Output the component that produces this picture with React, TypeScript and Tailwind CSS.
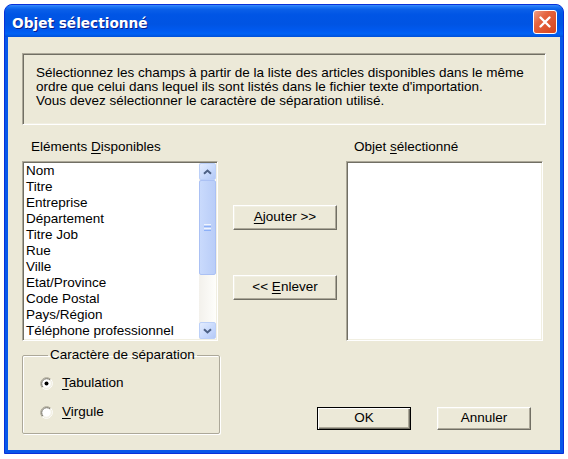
import React from 'react'

const items = [
  'Nom',
  'Titre',
  'Entreprise',
  'Département',
  'Titre Job',
  'Rue',
  'Ville',
  'Etat/Province',
  'Code Postal',
  'Pays/Région',
  'Téléphone professionnel',
]

// classic 3D edges
const sunken =
  'border border-t-[#aca899] border-l-[#aca899] border-b-white border-r-white shadow-[inset_1px_1px_0_#716f64,inset_-1px_-1px_0_#f1efe2]'
const raised =
  'border border-t-white border-l-white border-b-[#716f64] border-r-[#716f64] shadow-[inset_-1px_-1px_0_#aca899,inset_1px_1px_0_#f1efe2]'

function ScrollArrow({ down }: { down?: boolean }) {
  return (
    <div className="w-[17px] h-[17px] shrink-0 rounded-[2px] border border-[#bcd0f8] bg-[linear-gradient(135deg,#e3ecfe_0%,#c6d8fc_60%,#b4c9f6_100%)] flex items-center justify-center">
      <svg width="9" height="6" viewBox="0 0 9 6">
        <path
          d={down ? 'M1 1.2l3.5 3.3L8 1.2' : 'M1 4.8l3.5-3.3L8 4.8'}
          fill="none"
          stroke="#4d6185"
          strokeWidth="2"
        />
      </svg>
    </div>
  )
}

function Radio({ checked }: { checked?: boolean }) {
  return (
    <svg width="13" height="13" viewBox="0 0 13 13" className="shrink-0">
      <circle cx="6.5" cy="6.5" r="5" fill="#fff" />
      <path d="M2.26 10.74A6 6 0 0 1 10.74 2.26" fill="none" stroke="#aca899" />
      <path d="M10.74 2.26A6 6 0 0 1 2.26 10.74" fill="none" stroke="#fff" />
      <path d="M2.97 10.03A5 5 0 0 1 10.03 2.97" fill="none" stroke="#716f64" />
      <path d="M10.03 2.97A5 5 0 0 1 2.97 10.03" fill="none" stroke="#f1efe2" />
      {checked && <circle cx="6.5" cy="6.5" r="2" fill="#000" />}
    </svg>
  )
}

function Mn({ children }: { children: React.ReactNode }) {
  return <span className="underline underline-offset-2">{children}</span>
}

export default function App() {
  return (
    <div className="w-[568px] h-[459px] bg-white pl-[4px] pt-[4px] font-['Liberation_Sans',Arial,sans-serif] text-[13.5px] text-black">
      <div className="w-[560px] h-[450px] flex flex-col rounded-t-[8px] border border-[#0831d9] bg-[#0757e8] overflow-hidden">
        {/* title bar */}
        <div className="h-[32px] shrink-0 flex items-start justify-between pl-[7px] pr-[6px] bg-[linear-gradient(180deg,#3b8cf8_0%,#1b74f5_6%,#0a5fe8_14%,#0055e5_30%,#0054e3_60%,#005af0_80%,#0062f5_90%,#0050d8_100%)]">
          <span className="mt-[10px] leading-[17px] text-[13.7px] font-bold text-white font-['DejaVu_Sans',Verdana,sans-serif] [text-shadow:1px_1px_0_#0a1e8c]">
            Objet sélectionné
          </span>
          <div className="mt-[5px] w-[24px] h-[24px] rounded-[3px] border border-white bg-[linear-gradient(135deg,#ef9f86_0%,#e4643f_35%,#d8441d_100%)] flex items-center justify-center">
            <svg width="14" height="14" viewBox="0 0 14 14">
              <path d="M2.5 2.5l9 9M11.5 2.5l-9 9" stroke="#fff" strokeWidth="2.4" strokeLinecap="round" />
            </svg>
          </div>
        </div>

        {/* body */}
        <div className="flex-1 mx-[3px] mb-[3px] bg-[#ece9d8] px-[14px] pt-[16px] pb-[16px] flex flex-col">
          <div className={`h-[72px] ${sunken} pl-[13px] pt-[12px] leading-[14px]`}>
            <div>Sélectionnez les champs à partir de la liste des articles disponibles dans le même</div>
            <div>ordre que celui dans lequel ils sont listés dans le fichier texte d'importation.</div>
            <div>Vous devez sélectionner le caractère de séparation utilisé.</div>
          </div>

          <div className="flex mt-[14px]">
            <div className="w-[196px]">
              <div className="leading-[16px] pl-[9px]">
                Eléments <Mn>D</Mn>isponibles
              </div>
              <div className={`mt-[6px] h-[180px] bg-white flex ${sunken} p-[1px]`}>
                <div className="flex-1 pl-[2px] leading-[16px] whitespace-nowrap overflow-hidden">
                  {items.map((it) => (
                    <div key={it}>{it}</div>
                  ))}
                </div>
                <div className="w-[17px] flex flex-col bg-[linear-gradient(90deg,#f3f1ec,#fefefb)]">
                  <ScrollArrow />
                  <div className="h-[95px] rounded-[2px] border border-[#abc1f4] bg-[linear-gradient(90deg,#c9dafc,#b9cdf8)] flex flex-col items-center justify-center gap-[1px]">
                    <div className="w-[7px] h-[1px] bg-[#eef4fe]" />
                    <div className="w-[7px] h-[1px] bg-[#8cb0f8]" />
                    <div className="w-[7px] h-[1px] bg-[#eef4fe]" />
                    <div className="w-[7px] h-[1px] bg-[#8cb0f8]" />
                  </div>
                  <div className="flex-1" />
                  <ScrollArrow down />
                </div>
              </div>
            </div>

            <div className="w-[104px] ml-[15px] pt-[22px] flex flex-col">
              <button className={`mt-[44px] h-[25px] bg-[#ece9d8] ${raised}`}>
                <Mn>A</Mn>jouter &gt;&gt;
              </button>
              <button className={`mt-[45px] h-[25px] bg-[#ece9d8] ${raised}`}>
                &lt;&lt; <Mn>E</Mn>nlever
              </button>
            </div>

            <div className="w-[197px] ml-[9px]">
              <div className="leading-[16px] pl-[8px]">
                Objet <Mn>s</Mn>électionné
              </div>
              <div className={`mt-[6px] h-[180px] bg-white ${sunken}`} />
            </div>
          </div>

          <div className="flex items-end mt-[6px]">
            <fieldset className="w-[198px] h-[87px] border border-[#aca899] shadow-[inset_1px_1px_0_#fff,1px_1px_0_#fff] rounded-[2px] px-[17px] pb-[13px]">
              <legend className="ml-[8px] px-[2px] leading-[16px]">Caractère de séparation</legend>
              <div className="mt-[12px] flex flex-col gap-[13px]">
                <label className="h-[16px] flex items-center gap-[9px]">
                  <Radio checked />
                  <span>
                    <Mn>T</Mn>abulation
                  </span>
                </label>
                <label className="h-[16px] flex items-center gap-[9px]">
                  <Radio />
                  <span>
                    <Mn>V</Mn>irgule
                  </span>
                </label>
              </div>
            </fieldset>
            <div className="ml-auto mr-[15px] mb-[4px] flex gap-[26px]">
              <button className="w-[94px] h-[23px] bg-[#ece9d8] border border-black shadow-[inset_1px_1px_0_#fff,inset_-1px_-1px_0_#716f64,inset_-2px_-2px_0_#aca899]">
                OK
              </button>
              <button className={`w-[94px] h-[23px] bg-[#ece9d8] ${raised}`}>Annuler</button>
            </div>
          </div>
        </div>
      </div>
    </div>
  )
}
